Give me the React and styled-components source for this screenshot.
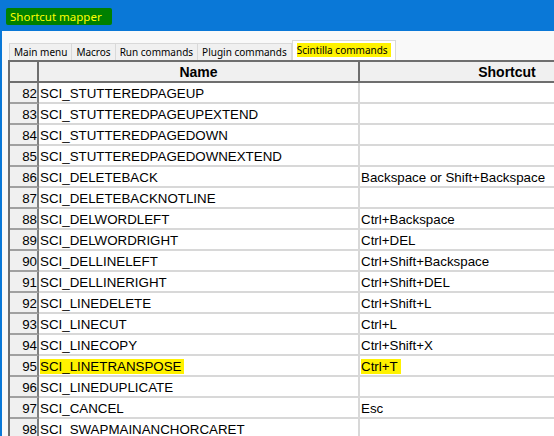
import React from "react";
import styled, { createGlobalStyle } from "styled-components";

const GlobalStyle = createGlobalStyle`
  html, body {
    margin: 0;
    padding: 0;
    width: 554px;
    height: 436px;
    overflow: hidden;
    background: #f9f9f9;
  }
`;

const Window = styled.div`
  width: 554px;
  height: 436px;
  overflow: hidden;
  border-left: 2px solid #0a78d7;
  box-sizing: border-box;
  background: #f9f9f9;
  display: flex;
  flex-direction: column;
`;

const TitleBar = styled.div`
  height: 31px;
  flex: none;
  background: #0a78d7;
  display: flex;
  align-items: center;
  padding-left: 4px;
`;

const Title = styled.span`
  background: #008000;
  color: #ffff00;
  font-family: "Noto Sans", "Open Sans", sans-serif;
  font-size: 11.5px;
  line-height: 17px;
  padding: 0 10px 0 4px;
  margin-top: 1px;
  border-radius: 2px;
`;

const Body = styled.div`
  padding: 9px 0 0 4px;
  display: flex;
  flex-direction: column;
`;

const TabRow = styled.div`
  display: flex;
  align-items: flex-end;
  height: 20px;
  padding-left: 3px;
`;

const Tab = styled.div`
  height: ${(p) => (p.$active ? "20px" : "17px")};
  box-sizing: border-box;
  padding: 0 ${(p) => (p.$active ? "4px" : "4px")};
  background: ${(p) => (p.$active ? "#ffffff" : "#f0f0f0")};
  border: 1px solid #d9d9d9;
  border-bottom: none;
  border-left: ${(p) => (p.$first || p.$active ? "1px solid #d9d9d9" : "none")};
  font-family: "Noto Sans", "Open Sans", sans-serif;
  font-size: 10px;
  color: #000;
  display: flex;
  align-items: ${(p) => (p.$active ? "flex-start" : "center")};
  padding-top: ${(p) => (p.$active ? "2px" : "0")};
`;

const Marked = styled.span`
  background: ${(p) => (p.$on ? "#fff200" : "transparent")};
  padding-right: ${(p) => (p.$on ? "3px" : "0")};
`;

const Grid = styled.div`
  border-top: 2px solid #6e6e6e;
  border-left: 2px solid #6e6e6e;
  margin-left: 2px;
  width: 700px;
  font-family: "Liberation Sans", Arial, sans-serif;
  color: #000;
`;

const Row = styled.div`
  display: grid;
  grid-template-columns: 29px 321px 296px;
  height: 21px;
`;

const HeadCell = styled.div`
  background: #f0f0f0;
  border-right: 2px solid #6e6e6e;
  border-bottom: 2px solid #6e6e6e;
  font-weight: bold;
  font-size: 14px;
  display: flex;
  align-items: center;
  justify-content: center;
  padding-top: 1px;
`;

const NumCell = styled.div`
  background: #f0f0f0;
  border-right: 2px solid #7f7f7f;
  border-bottom: 2px solid #a0a0a0;
  font-size: 13.33px;
  display: flex;
  align-items: center;
  justify-content: flex-end;
  padding-top: 1px;
`;

const DataCell = styled.div`
  background: #ffffff;
  border-right: 2px solid #d8d8d8;
  border-bottom: 2px solid #d8d8d8;
  font-size: 13.33px;
  display: flex;
  align-items: center;
  padding-left: 1px;
  padding-top: 1px;
  white-space: nowrap;
`;

const tabs = ["Main menu", "Macros", "Run commands", "Plugin commands", "Scintilla commands"];

const rows = [
  [82, "SCI_STUTTEREDPAGEUP", ""],
  [83, "SCI_STUTTEREDPAGEUPEXTEND", ""],
  [84, "SCI_STUTTEREDPAGEDOWN", ""],
  [85, "SCI_STUTTEREDPAGEDOWNEXTEND", ""],
  [86, "SCI_DELETEBACK", "Backspace or Shift+Backspace"],
  [87, "SCI_DELETEBACKNOTLINE", ""],
  [88, "SCI_DELWORDLEFT", "Ctrl+Backspace"],
  [89, "SCI_DELWORDRIGHT", "Ctrl+DEL"],
  [90, "SCI_DELLINELEFT", "Ctrl+Shift+Backspace"],
  [91, "SCI_DELLINERIGHT", "Ctrl+Shift+DEL"],
  [92, "SCI_LINEDELETE", "Ctrl+Shift+L"],
  [93, "SCI_LINECUT", "Ctrl+L"],
  [94, "SCI_LINECOPY", "Ctrl+Shift+X"],
  [95, "SCI_LINETRANSPOSE", "Ctrl+T"],
  [96, "SCI_LINEDUPLICATE", ""],
  [97, "SCI_CANCEL", "Esc"],
  [98, "SCI_SWAPMAINANCHORCARET", ""],
];

export default function App() {
  return (
    <>
      <GlobalStyle />
      <Window>
        <TitleBar>
          <Title>Shortcut mapper</Title>
        </TitleBar>
        <Body>
          <TabRow>
            {tabs.map((t, i) => (
              <Tab key={t} $first={i === 0} $active={i === tabs.length - 1}>
                <Marked $on={i === tabs.length - 1}>{t}</Marked>
              </Tab>
            ))}
          </TabRow>
          <Grid>
            <Row>
              <HeadCell />
              <HeadCell>Name</HeadCell>
              <HeadCell>Shortcut</HeadCell>
            </Row>
            {rows.map(([n, name, key]) => (
              <Row key={n}>
                <NumCell>{n}</NumCell>
                <DataCell>
                  <Marked $on={n === 95}>{name}</Marked>
                </DataCell>
                <DataCell>
                  <Marked $on={n === 95}>{key}</Marked>
                </DataCell>
              </Row>
            ))}
          </Grid>
        </Body>
      </Window>
    </>
  );
}
